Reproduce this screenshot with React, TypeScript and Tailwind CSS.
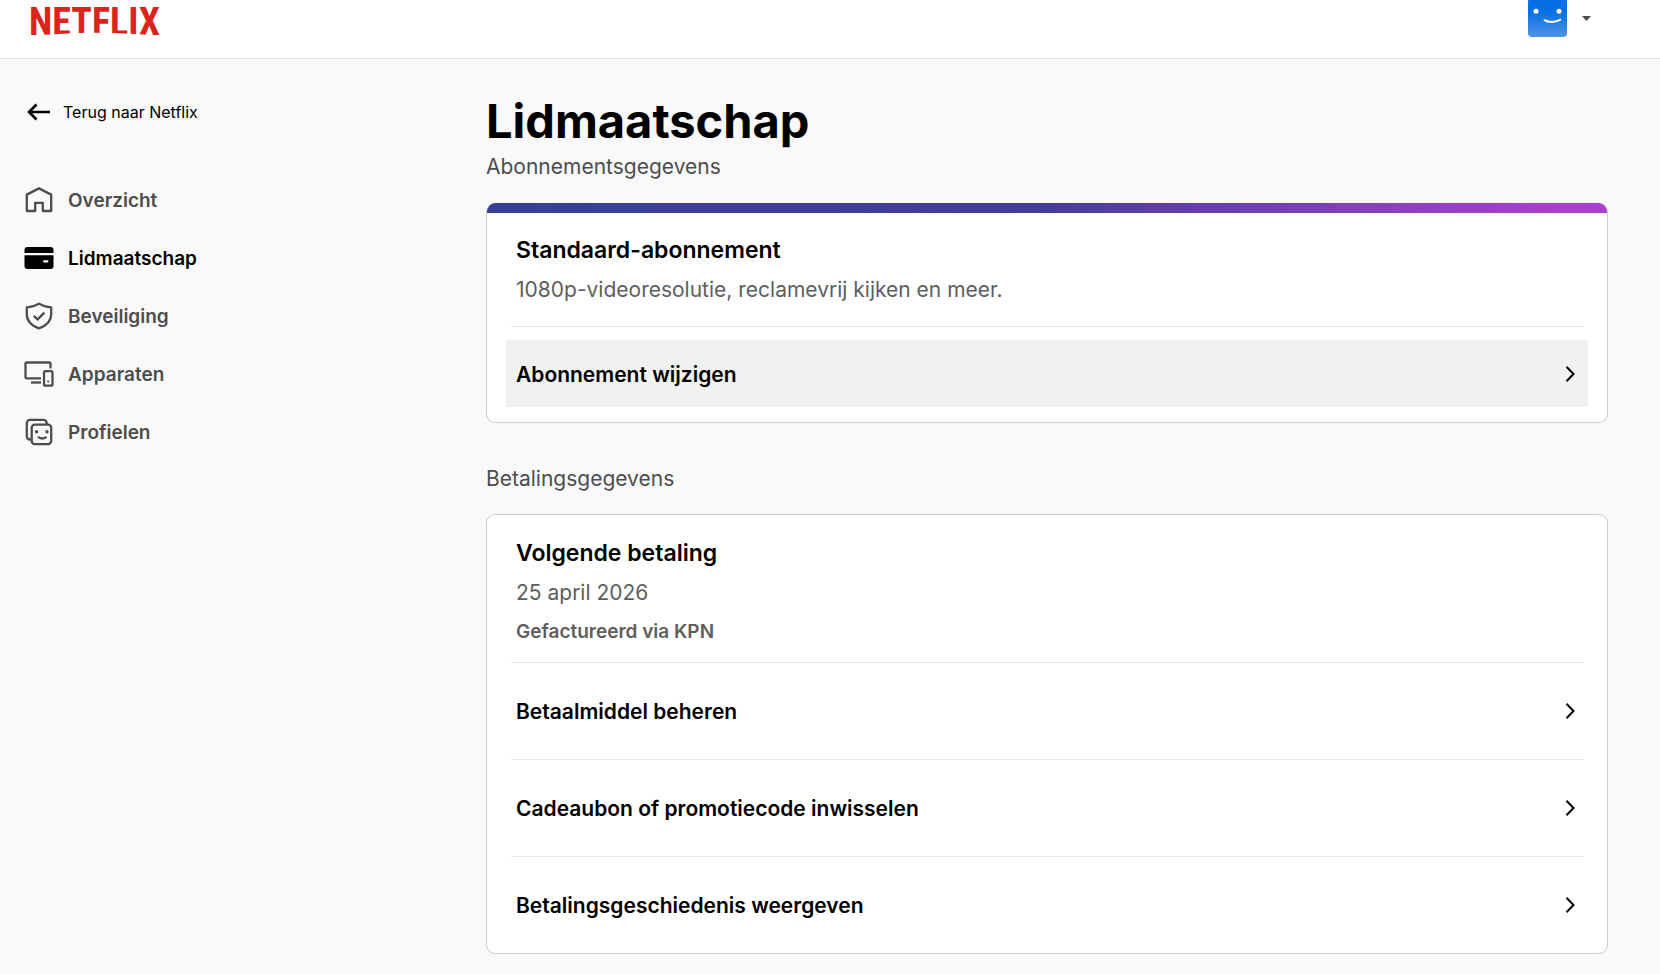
import type { ReactNode } from 'react'

interface NavItem {
  label: string
  icon: ReactNode
  active?: boolean
}

const navItems: NavItem[] = [
  { label: 'Overzicht', icon: <HomeIcon /> },
  { label: 'Lidmaatschap', icon: <CardIcon />, active: true },
  { label: 'Beveiliging', icon: <ShieldIcon /> },
  { label: 'Apparaten', icon: <DevicesIcon /> },
  { label: 'Profielen', icon: <ProfilesIcon /> },
]

const paymentLinks = [
  'Betaalmiddel beheren',
  'Cadeaubon of promotiecode inwisselen',
  'Betalingsgeschiedenis weergeven',
]

function HomeIcon() {
  return (
    <svg className="w-7 h-7 shrink-0" viewBox="0 0 28 28" fill="none" stroke="currentColor" strokeWidth={2.3}>
      <path strokeLinejoin="round" d="M1.800 8.600 14 2.400l12.200 6.200V25h-8.400v-8.200h-7.600V25H1.800Z" />
    </svg>
  )
}

function CardIcon() {
  return (
    <svg className="w-7 h-7 shrink-0 overflow-visible" viewBox="0 0 28 28" fill="currentColor">
      <path d="M2.500 3H25.500A3 3 0 0 1 28.500 6v3h-29V6a3 3 0 0 1 3-3Z" />
      <path
        fillRule="evenodd"
        d="M-.5 11.300h29V22a3 3 0 0 1-3 3h-23a3 3 0 0 1-3-3ZM18.300 16.200v2.400h5V16.200Z"
      />
    </svg>
  )
}

function ShieldIcon() {
  return (
    <svg className="w-7 h-7 shrink-0" viewBox="0 0 28 28" fill="none" stroke="currentColor" strokeWidth={2.3}>
      <path
        strokeLinejoin="round"
        d="M14 1.600c3.600 2.300 7.700 3.500 12.200 3.700v6.900c0 6.600-4.700 11.400-12.200 14.200C6.500 23.600 1.800 18.800 1.800 12.200V5.300C6.300 5.100 10.400 3.900 14 1.600Z"
      />
      <path d="m8.700 13.800 3.900 3.600 6.800-6.800" />
    </svg>
  )
}

function DevicesIcon() {
  return (
    <svg className="w-7 h-7 shrink-0 overflow-visible" viewBox="0 0 28 28" fill="none" stroke="currentColor" strokeWidth={2.3}>
      <path d="M16 18.300H1.500a1 1 0 0 1-1-1V3.500a1 1 0 0 1 1-1h23a1 1 0 0 1 1 1v5" />
      <path d="M6 22.500h10" />
      <rect x="19" y="11.200" width="8.500" height="14.500" rx="1.500" />
      <circle cx="23.200" cy="21.500" r="1.100" fill="currentColor" stroke="none" />
    </svg>
  )
}

function ProfilesIcon() {
  return (
    <svg className="w-7 h-7 shrink-0" viewBox="0 0 28 28" fill="none" stroke="currentColor" strokeWidth={2.3}>
      <path d="M6.500 21.500H5a3.200 3.200 0 0 1-3.200-3.200V5A3.200 3.200 0 0 1 5 1.800h13.500A3.200 3.200 0 0 1 21.700 5v1.500" />
      <rect x="6.700" y="6.700" width="19.500" height="19.500" rx="3.200" />
      <circle cx="11.600" cy="13.800" r="1.700" fill="currentColor" stroke="none" />
      <circle cx="22" cy="13.800" r="1.700" fill="currentColor" stroke="none" />
      <path d="M13 18.800c1.200 1.200 2.500 1.700 4.200 1.700 1.700 0 3.200-.5 4.300-1.700" />
    </svg>
  )
}

function BackArrowIcon() {
  return (
    <svg className="w-7 h-7 shrink-0" viewBox="0 0 28 28" fill="none" stroke="currentColor" strokeWidth={2.6}>
      <path d="M25 14H4.500M11.500 6.500 4 14l7.500 7.500" />
    </svg>
  )
}

function ChevronIcon() {
  return (
    <svg className="w-4 h-6 shrink-0" viewBox="0 0 16 24" fill="none" stroke="currentColor" strokeWidth={2}>
      <path d="m4.500 4.800 7 7.200-7 7.200" />
    </svg>
  )
}

function Avatar() {
  return (
    <svg className="w-[39px] h-[37px]" viewBox="0 0 39 37">
      <defs>
        <linearGradient id="avatar" x1="0" y1="0" x2="0" y2="1">
          <stop offset="0.35" stopColor="#0670e2" />
          <stop offset="1" stopColor="#4f93e6" />
        </linearGradient>
      </defs>
      <rect y="-2" width="39" height="39" rx="4" fill="url(#avatar)" />
      <circle cx="8" cy="11.300" r="2.500" fill="#fff" />
      <circle cx="31" cy="11.300" r="2.500" fill="#fff" />
      <path d="M16 19.800c4.500 3 12 3 17-.5" fill="none" stroke="#fff" strokeWidth={2} />
    </svg>
  )
}

function RowLink({ label }: { label: string }) {
  return (
    <span className="flex w-full items-center justify-between">
      <span className="pt-0.5 text-[21px] leading-7 font-semibold text-black">{label}</span>
      <ChevronIcon />
    </span>
  )
}

export default function App() {
  return (
    <div className="min-h-screen bg-[#f9f9f9] font-['Inter','Liberation_Sans',sans-serif] text-black">
      <header className="flex h-[59px] items-start justify-between border-b border-[#e6e6e6] bg-white pl-[29px] pr-[69px]">
        <a href="#" aria-label="Netflix" className="block">
          <svg className="w-34 h-10 overflow-visible" viewBox="0 0 136 40">
            <defs>
              {/* curved underside of the wordmark */}
              <clipPath id="arc">
                <path d="M0 0H136V36.500Q66 29 0 36.500Z" />
              </clipPath>
            </defs>
            <text
              x="0"
              y="35"
              clipPath="url(#arc)"
              className="fill-[#d9251c] text-[38px] font-bold font-['Roboto_Condensed','Liberation_Sans_Narrow','Open_Sans_Condensed',sans-serif]"
            >
              NETFLIX
            </text>
          </svg>
        </a>
        <button type="button" aria-label="Account" className="flex items-center gap-[15px]">
          <Avatar />
          <svg className="w-[9px] h-[5px]" viewBox="0 0 9 5">
            <path d="M0 0h9L4.500 5Z" fill="#4d4d4d" />
          </svg>
        </button>
      </header>

      <div className="flex">
        <aside className="w-[486px] shrink-0 pl-[25px] pt-[39px]">
          <a href="#" className="flex items-center gap-[10px] text-[16px] leading-7">
            <BackArrowIcon />
            Terug naar Netflix
          </a>
          <nav className="mt-[60px]">
            <ul className="flex flex-col gap-7">
              {navItems.map(item => (
                <li key={item.label}>
                  <a
                    href="#"
                    aria-current={item.active ? 'page' : undefined}
                    className={`flex items-start gap-[15px] text-[19px] leading-[30px] font-semibold ${
                      item.active ? 'text-black' : 'text-[#4d4d4d]'
                    }`}
                  >
                    {item.icon}
                    {item.label}
                  </a>
                </li>
              ))}
            </ul>
          </nav>
        </aside>

        <main className="min-w-0 flex-1 pt-[34px] pr-[52px] pb-[21px]">
          <h1 className="text-[47px] leading-[56px] font-bold">Lidmaatschap</h1>

          <h2 className="mt-1 text-[21px] leading-7 text-[#4d4d4d]">Abonnementsgegevens</h2>
          <section className="mt-[22px] overflow-hidden rounded-[9px] border-x border-b border-[#cccccc] bg-white">
            <div className="h-[10px] bg-linear-to-r from-[#35409a] via-[#463c9c] to-[#a93ecf] to-95%" />
            <div className="px-[29px] pt-[21px]">
              <h3 className="text-[23px] leading-8 font-semibold">Standaard-abonnement</h3>
              <p className="mt-[10px] text-[21px] leading-7 text-[#5e5e5e]">
                1080p-videoresolutie, reclamevrij kijken en meer.
              </p>
            </div>
            <hr className="mx-6 mt-[22px] border-[#e6e6e6]" />
            <div className="px-[19px] pt-[13px] pb-[15px]">
              <button type="button" className="flex h-[67px] w-full items-center bg-[#f1f1f1] px-[10px] text-left">
                <RowLink label="Abonnement wijzigen" />
              </button>
            </div>
          </section>

          <h2 className="mt-[42px] text-[21px] leading-7 text-[#4d4d4d]">Betalingsgegevens</h2>
          <section className="mt-[21px] rounded-[9px] border border-[#cccccc] bg-white">
            <div className="px-[29px] pt-[22px] pb-4">
              <h3 className="text-[23px] leading-8 font-semibold">Volgende betaling</h3>
              <p className="mt-[10px] text-[21px] leading-7 text-[#5e5e5e]">25 april 2026</p>
              <p className="mt-[11px] text-[19px] leading-7 font-semibold text-[#5e5e5e]">Gefactureerd via KPN</p>
            </div>
            <ul className="mx-6">
              {paymentLinks.map(label => (
                <li key={label} className="border-t border-[#e6e6e6]">
                  <button type="button" className="flex h-24 w-full items-center px-[5px] text-left">
                    <RowLink label={label} />
                  </button>
                </li>
              ))}
            </ul>
          </section>
        </main>
      </div>
    </div>
  )
}
